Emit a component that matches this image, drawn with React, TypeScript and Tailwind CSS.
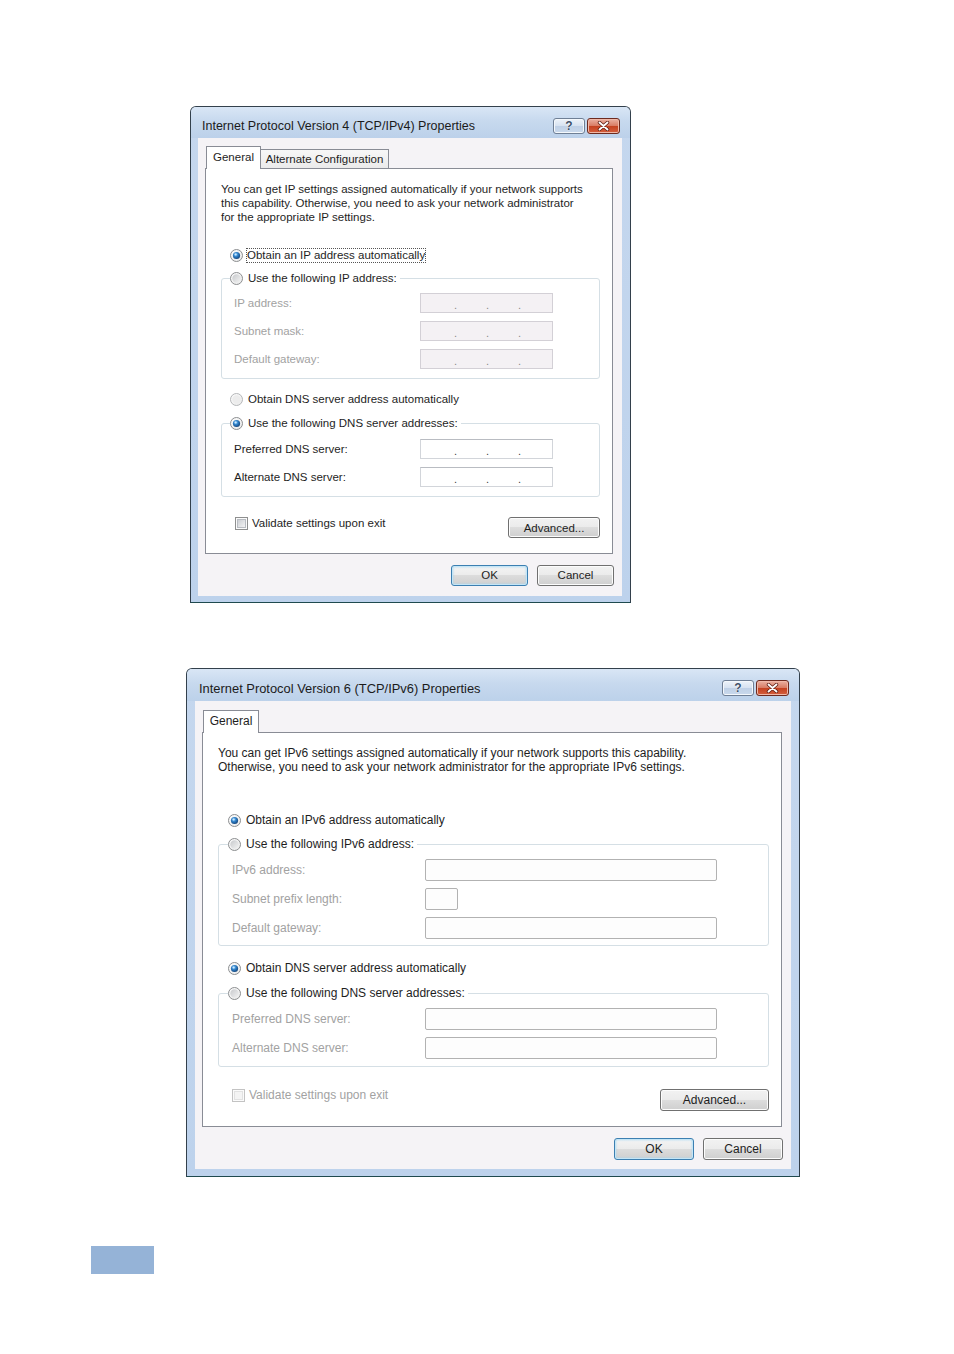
import React from "react";

const FONT = "font-['Liberation_Sans',Arial,sans-serif]";

function Defs() {
  return (
    <svg width="0" height="0" className="block w-0 h-0 overflow-hidden">
      <defs>
        <linearGradient id="radioBg" x1="0" y1="0" x2="1" y2="1">
          <stop offset="0" stopColor="#fdfdfd" />
          <stop offset="1" stopColor="#e9e9e9" />
        </linearGradient>
        <linearGradient id="radioIn" x1="0" y1="0" x2="1" y2="1">
          <stop offset="0" stopColor="#c7c9cc" />
          <stop offset="1" stopColor="#f3f3f3" />
        </linearGradient>
        <radialGradient id="radioDot" cx="0.4" cy="0.35" r="0.7">
          <stop offset="0" stopColor="#8fd0ff" />
          <stop offset="0.45" stopColor="#2e7fc6" />
          <stop offset="1" stopColor="#123f74" />
        </radialGradient>
        <linearGradient id="chkIn" x1="0" y1="0" x2="1" y2="1">
          <stop offset="0" stopColor="#c9ccd1" />
          <stop offset="1" stopColor="#f6f6f6" />
        </linearGradient>
      </defs>
    </svg>
  );
}

function Radio({ on, dim }: { on?: boolean; dim?: boolean }) {
  return (
    <svg width="13" height="13" viewBox="0 0 13 13" className="block shrink-0">
      <circle cx="6.5" cy="6.5" r="6" fill="url(#radioBg)" stroke={dim ? "#b4b6b8" : "#8c8e90"} strokeWidth="1" />
      {on ? (
        <>
          <circle cx="6.5" cy="6.5" r="3.6" fill="url(#radioDot)" />
          <circle cx="5.6" cy="5.5" r="1.1" fill="#d8efff" opacity="0.85" />
        </>
      ) : (
        <circle cx="6.5" cy="6.5" r="4.2" fill={dim ? "#ececec" : "url(#radioIn)"} />
      )}
    </svg>
  );
}

function Check({ dim }: { dim?: boolean }) {
  return (
    <svg width="13" height="13" viewBox="0 0 13 13" className="block shrink-0">
      <rect x="0.5" y="0.5" width="12" height="12" fill="#fbfbfb" stroke={dim ? "#c3c3c3" : "#8e8f8f"} />
      <rect x="2.5" y="2.5" width="8" height="8" fill={dim ? "#f4f4f4" : "url(#chkIn)"} stroke={dim ? "#e2e2e2" : "#b8bcc2"} />
    </svg>
  );
}

function HelpBtn() {
  return (
    <div className="w-[32px] h-[16px] rounded-[3px] border border-[#6f7f95] bg-[linear-gradient(#eef3fa,#d6e2f0_50%,#bfd0e6_50%,#c9d9ec)] shadow-[inset_0_0_0_1px_#f4f8fc] flex items-center justify-center">
      <span className="text-[12px] leading-[12px] font-bold text-[#3c4f68] [text-shadow:0_0_1px_#fff,0_0_1px_#fff]">?</span>
    </div>
  );
}

function CloseBtn() {
  return (
    <div className="w-[33px] h-[16px] rounded-[3px] border border-[#6d2b20] bg-[linear-gradient(#eab1a2,#d87a62_50%,#c4401f_50%,#d4603f)] shadow-[inset_0_0_0_1px_#f0b8a8] flex items-center justify-center">
      <svg width="13" height="10" viewBox="0 0 13 10">
        <path d="M2.5 1.5 L10.5 8.5 M10.5 1.5 L2.5 8.5" stroke="#5a1a10" strokeWidth="3.4" strokeLinecap="round" />
        <path d="M2.5 1.5 L10.5 8.5 M10.5 1.5 L2.5 8.5" stroke="#ffffff" strokeWidth="1.9" strokeLinecap="round" />
      </svg>
    </div>
  );
}

function Btn({ cls, focused, children }: { cls: string; focused?: boolean; children: React.ReactNode }) {
  return (
    <div
      className={`${cls} rounded-[3px] border flex items-center justify-center text-[#1e1e1e] ${
        focused
          ? "border-[#3c7fb1] bg-[linear-gradient(#f4f4f4,#ebebeb_50%,#dcdcdc_50%,#cfcfcf)] shadow-[inset_0_0_0_1px_#c4e5f6,inset_0_0_2px_1px_#9fd6f2]"
          : "border-[#707070] bg-[linear-gradient(#f2f2f2,#ebebeb_50%,#dddddd_50%,#cfcfcf)] shadow-[inset_0_0_0_1px_#fcfcfc]"
      }`}
    >
      {children}
    </div>
  );
}

function IpBox({ dis }: { dis?: boolean }) {
  return (
    <div
      className={`w-[133px] h-[20px] border flex items-center pl-[33px] gap-[30px] text-[11px] leading-[11px] pt-[4px] ${
        dis ? "bg-[#f4f1f4] border-[#d3d0d6] text-[#8a8a8a]" : "bg-white border-[#d2d5da] border-t-[#b9bcc2] text-[#444]"
      }`}
    >
      <span className="w-[2px]">.</span>
      <span className="w-[2px]">.</span>
      <span className="w-[2px]">.</span>
    </div>
  );
}

function Box6({ cls }: { cls: string }) {
  return <div className={`${cls} h-[22px] rounded-[2px] border border-[#b2b2b2] bg-[#fdfdfd]`} />;
}

function TitleBar({ title, h, textPt, btnPt, pl, pr, ts }: { title: string; h: string; textPt: string; btnPt: string; pl: string; pr: string; ts: string }) {
  return (
    <div className={`${h} ${pl} ${pr} flex items-start justify-between rounded-t-[5px] bg-[linear-gradient(180deg,#d9e6f5_0%,#c7d9ee_45%,#bcd1ea_100%)]`}>
      <div className={`${textPt} ${ts} leading-[14px] text-[#1b1b1b]`}>{title}</div>
      <div className={`${btnPt} flex gap-[2px]`}>
        <HelpBtn />
        <CloseBtn />
      </div>
    </div>
  );
}

function Dialog4() {
  return (
    <div className="w-[441px] h-[497px] border border-[#33404c] border-b-[#1f4a4f] rounded-t-[6px] bg-[linear-gradient(180deg,#c5d7ee,#bdd2ec)] flex flex-col">
      <TitleBar title="Internet Protocol Version 4 (TCP/IPv4) Properties" h="h-[31px]" textPt="pt-[12px]" btnPt="pt-[11px]" pl="pl-[11px]" pr="pr-[10px]" ts="text-[12.5px]" />
      <div className="ml-[7px] w-[424px] h-[458px] bg-[#f5f3f6] flex flex-col">
        <div className="pt-[8px] pl-[8px] flex items-end h-[30px] text-[11.5px] leading-[14px] text-[#1e1e1e]">
          <div className="relative z-10 -mb-px w-[55px] h-[23px] bg-white border border-[#898c95] border-b-0 flex justify-center pt-[3px]">General</div>
          <div className="-ml-px w-[129px] h-[19px] bg-[linear-gradient(#f7f7f7,#ebebeb)] border border-[#898c95] border-b-0 flex justify-center pt-[2px]">
            Alternate Configuration
          </div>
        </div>
        <div className="ml-[7px] w-[408px] h-[386px] bg-white border border-[#898c95] pl-[15px] pt-[13px] text-[11.5px] leading-[14px] text-[#1e1e1e]">
          <p className="whitespace-nowrap">
            You can get IP settings assigned automatically if your network supports
            <br />
            this capability. Otherwise, you need to ask your network administrator
            <br />
            for the appropriate IP settings.
          </p>
          <div className="mt-[21px] ml-[9px] h-[20px] flex items-center gap-[3px]">
            <Radio on />
            <span className="border border-dotted border-[#555] px-[0px] leading-[13px]">Obtain an IP address automatically</span>
          </div>
          <div className="mt-[13px] w-[379px] border border-[#d5dfe5] rounded-[3px] pb-[5px]">
            <div className="-mt-[11px] ml-[8px] h-[20px] w-fit pr-[3px] bg-white flex items-center gap-[5px]">
              <Radio />
              <span>Use the following IP address:</span>
            </div>
            <div className="pt-[1px]">
              {["IP address:", "Subnet mask:", "Default gateway:"].map((l) => (
                <div key={l} className="h-[28px] pl-[12px] flex items-center">
                  <span className="w-[186px] text-[#a2a2a2]">{l}</span>
                  <IpBox dis />
                </div>
              ))}
            </div>
          </div>
          <div className="mt-[10px] ml-[9px] h-[20px] flex items-center gap-[5px]">
            <Radio dim />
            <span>Obtain DNS server address automatically</span>
          </div>
          <div className="mt-[14px] w-[379px] border border-[#d5dfe5] rounded-[3px] pb-[5px]">
            <div className="-mt-[11px] ml-[8px] h-[20px] w-fit pr-[3px] bg-white flex items-center gap-[5px]">
              <Radio on />
              <span>Use the following DNS server addresses:</span>
            </div>
            <div className="pt-[2px]">
              {["Preferred DNS server:", "Alternate DNS server:"].map((l) => (
                <div key={l} className="h-[28px] pl-[12px] flex items-center">
                  <span className="w-[186px]">{l}</span>
                  <IpBox />
                </div>
              ))}
            </div>
          </div>
          <div className="mt-[19px] w-[379px] flex items-start justify-between">
            <div className="ml-[14px] flex items-center gap-[4px]">
              <Check />
              <span>Validate settings upon exit</span>
            </div>
            <Btn cls="mt-[1px] w-[92px] h-[21px]">Advanced...</Btn>
          </div>
        </div>
        <div className="mt-[11px] pr-[8px] flex justify-end gap-[9px] text-[11.5px]">
          <Btn cls="w-[77px] h-[21px]" focused>
            OK
          </Btn>
          <Btn cls="w-[77px] h-[21px]">Cancel</Btn>
        </div>
      </div>
    </div>
  );
}

function Dialog6() {
  return (
    <div className="w-[614px] h-[509px] border border-[#33404c] border-b-[#1f4a4f] rounded-t-[6px] bg-[linear-gradient(180deg,#c5d7ee,#bdd2ec)] flex flex-col">
      <TitleBar title="Internet Protocol Version 6 (TCP/IPv6) Properties" h="h-[32px]" textPt="pt-[13px]" btnPt="pt-[11px]" pl="pl-[12px]" pr="pr-[10px]" ts="text-[12.9px]" />
      <div className="ml-[8px] w-[596px] h-[468px] bg-[#f5f3f6] flex flex-col">
        <div className="pt-[9px] pl-[8px] flex items-end h-[31px] text-[12px] leading-[14px] text-[#1e1e1e]">
          <div className="relative z-10 -mb-px w-[56px] h-[23px] bg-white border border-[#898c95] border-b-0 flex justify-center pt-[3px]">General</div>
        </div>
        <div className="ml-[7px] w-[580px] h-[395px] bg-white border border-[#898c95] pl-[15px] pt-[13px] text-[12px] leading-[14px] text-[#1e1e1e]">
          <p className="whitespace-nowrap">
            You can get IPv6 settings assigned automatically if your network supports this capability.
            <br />
            Otherwise, you need to ask your network administrator for the appropriate IPv6 settings.
          </p>
          <div className="mt-[36px] ml-[10px] h-[20px] flex items-center gap-[5px]">
            <Radio on />
            <span>Obtain an IPv6 address automatically</span>
          </div>
          <div className="mt-[14px] w-[551px] border border-[#d5dfe5] rounded-[3px] pb-[3px]">
            <div className="-mt-[11px] ml-[9px] h-[20px] w-fit pr-[3px] bg-white flex items-center gap-[5px]">
              <Radio />
              <span>Use the following IPv6 address:</span>
            </div>
            <div className="pt-[1px] text-[#a2a2a2]">
              <div className="h-[29px] pl-[13px] flex items-center">
                <span className="w-[193px]">IPv6 address:</span>
                <Box6 cls="w-[292px]" />
              </div>
              <div className="h-[29px] pl-[13px] flex items-center">
                <span className="w-[193px]">Subnet prefix length:</span>
                <Box6 cls="w-[33px]" />
              </div>
              <div className="h-[29px] pl-[13px] flex items-center">
                <span className="w-[193px]">Default gateway:</span>
                <Box6 cls="w-[292px]" />
              </div>
            </div>
          </div>
          <div className="mt-[12px] ml-[10px] h-[20px] flex items-center gap-[5px]">
            <Radio on />
            <span>Obtain DNS server address automatically</span>
          </div>
          <div className="mt-[15px] w-[551px] border border-[#d5dfe5] rounded-[3px] pb-[4px]">
            <div className="-mt-[11px] ml-[9px] h-[20px] w-fit pr-[3px] bg-white flex items-center gap-[5px]">
              <Radio />
              <span>Use the following DNS server addresses:</span>
            </div>
            <div className="pt-[1px] text-[#a2a2a2]">
              <div className="h-[29px] pl-[13px] flex items-center">
                <span className="w-[193px]">Preferred DNS server:</span>
                <Box6 cls="w-[292px]" />
              </div>
              <div className="h-[29px] pl-[13px] flex items-center">
                <span className="w-[193px]">Alternate DNS server:</span>
                <Box6 cls="w-[292px]" />
              </div>
            </div>
          </div>
          <div className="mt-[21px] w-[551px] flex items-start justify-between">
            <div className="ml-[14px] flex items-center gap-[4px] text-[#a2a2a2]">
              <Check dim />
              <span>Validate settings upon exit</span>
            </div>
            <Btn cls="mt-[1px] w-[109px] h-[22px]">Advanced...</Btn>
          </div>
        </div>
        <div className="mt-[11px] pr-[8px] flex justify-end gap-[9px] text-[12px]">
          <Btn cls="w-[80px] h-[22px]" focused>
            OK
          </Btn>
          <Btn cls="w-[80px] h-[22px]">Cancel</Btn>
        </div>
      </div>
    </div>
  );
}

export default function App() {
  return (
    <div className={`${FONT} w-[954px] h-[1354px] bg-white overflow-hidden`}>
      <Defs />
      <div className="pt-[106px] pl-[190px]">
        <Dialog4 />
      </div>
      <div className="mt-[65px] pl-[186px]">
        <Dialog6 />
      </div>
      <div className="mt-[69px] ml-[91px] w-[63px] h-[28px] bg-[#95b3d7]" />
    </div>
  );
}
